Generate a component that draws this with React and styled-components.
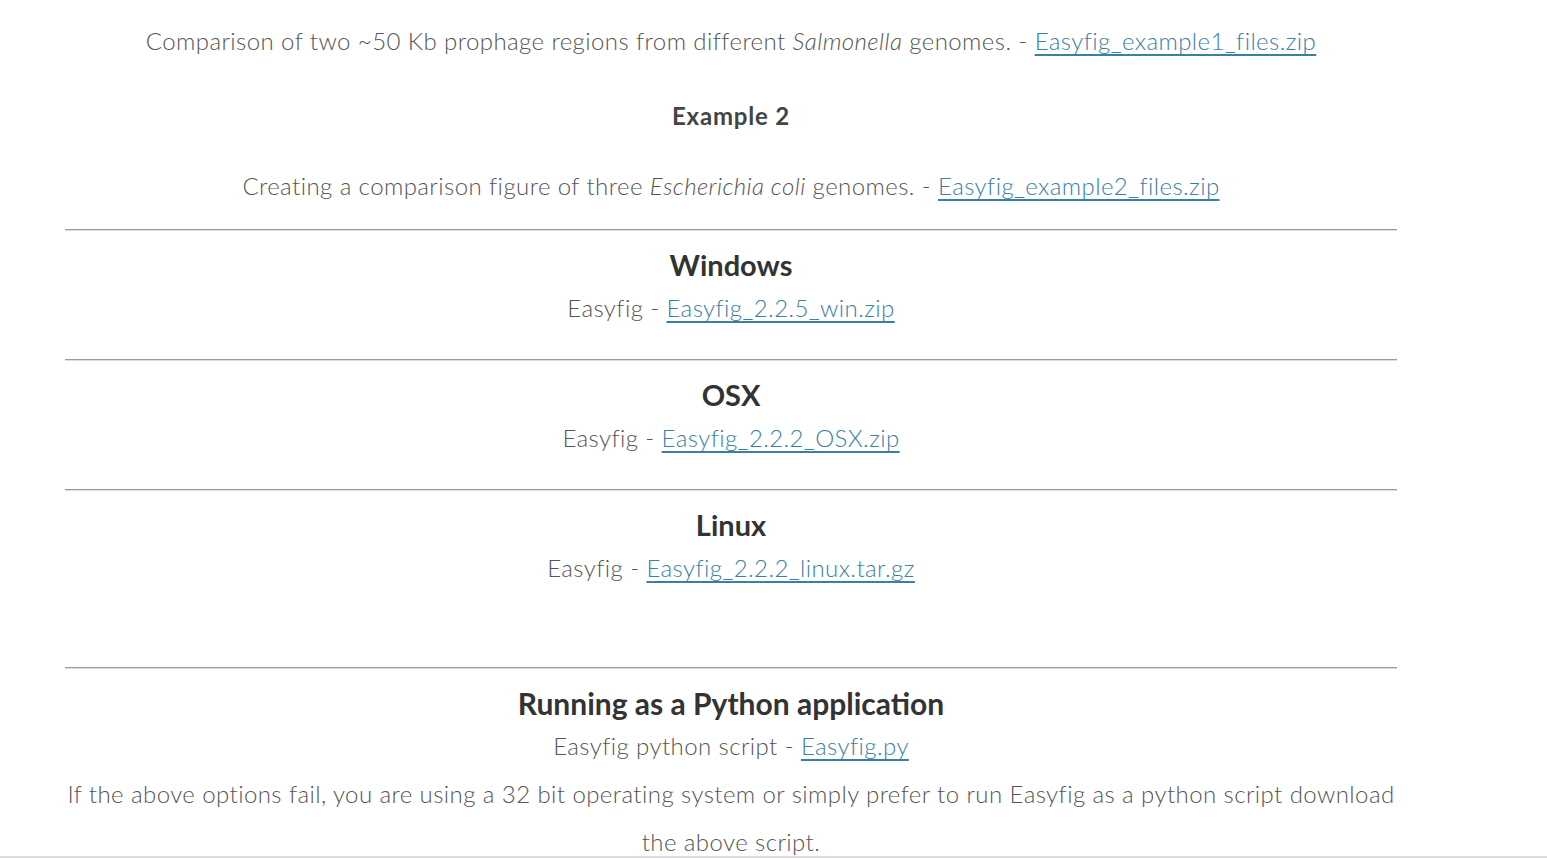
import React from "react";
import styled, { createGlobalStyle } from "styled-components";

const Global = createGlobalStyle`
  html, body { margin: 0; padding: 0; background: #fff; }
  body { font-family: Lato, "Source Sans Pro", "Noto Sans", sans-serif; font-weight: 300; color: #555; }
`;

const Main = styled.main`
  width: 1332px;
  margin-left: 65px;
  padding-top: 17px;
  text-align: center;
`;

const Para = styled.p`
  margin: 0 0 ${(p) => p.$mb ?? 0}px;
  font-size: 24px;
  line-height: 48px;
  color: #555;
  letter-spacing: 0.42px;
`;

const Strong = styled.p`
  margin: 0 0 22px;
  padding-top: 27px;
  font-size: 24px;
  line-height: 48px;
  font-weight: 700;
  color: #444;
  letter-spacing: 0.8px;
`;

const Link = styled.a`
  color: #3a7fa6;
  text-decoration: underline;
  text-decoration-thickness: 1.5px;
  text-underline-offset: 4px;
`;

const Rule = styled.hr`
  margin: 0;
  height: 0;
  border: none;
  border-top: 1px solid #9a9a9a;
  border-bottom: 1px solid #dedede;
`;

const Section = styled.section`
  padding: 16px 0 27px;
`;

const Heading = styled.h3`
  margin: 0 0 1px;
  font-size: ${(p) => p.$size ?? 30}px;
  line-height: 36px;
  font-weight: 700;
  color: #333;
`;

const Spacer = styled.div`
  height: 48px;
`;

const BottomBar = styled.div`
  position: fixed;
  left: 0;
  right: 0;
  bottom: 0;
  height: 1px;
  border-top: 2px solid #dcdcdc;
  background: #fff;
`;

export default function App() {
  return (
    <>
      <Global />
      <Main>
        <Para>
          Comparison of two ~50 Kb prophage regions from different <em>Salmonella</em> genomes. -{" "}
          <Link href="#">Easyfig_example1_files.zip</Link>
        </Para>
        <Strong>Example 2</Strong>
        <Para $mb={19}>
          Creating a comparison figure of three <em>Escherichia coli</em> genomes. -{" "}
          <Link href="#">Easyfig_example2_files.zip</Link>
        </Para>
        <Rule />
        <Section>
          <Heading $size={29}>Windows</Heading>
          <Para>
            Easyfig - <Link href="#">Easyfig_2.2.5_win.zip</Link>
          </Para>
        </Section>
        <Rule />
        <Section>
          <Heading $size={29}>OSX</Heading>
          <Para>
            Easyfig - <Link href="#">Easyfig_2.2.2_OSX.zip</Link>
          </Para>
        </Section>
        <Rule />
        <Section>
          <Heading $size={29}>Linux</Heading>
          <Para>
            Easyfig - <Link href="#">Easyfig_2.2.2_linux.tar.gz</Link>
          </Para>
          <Spacer />
        </Section>
        <Rule />
        <Section>
          <Heading>Running as a Python application</Heading>
          <Para>
            Easyfig python script - <Link href="#">Easyfig.py</Link>
          </Para>
          <Para>
            If the above options fail, you are using a 32 bit operating system or simply prefer to run Easyfig as a
            python script download the above script.
          </Para>
        </Section>
      </Main>
      <BottomBar />
    </>
  );
}
